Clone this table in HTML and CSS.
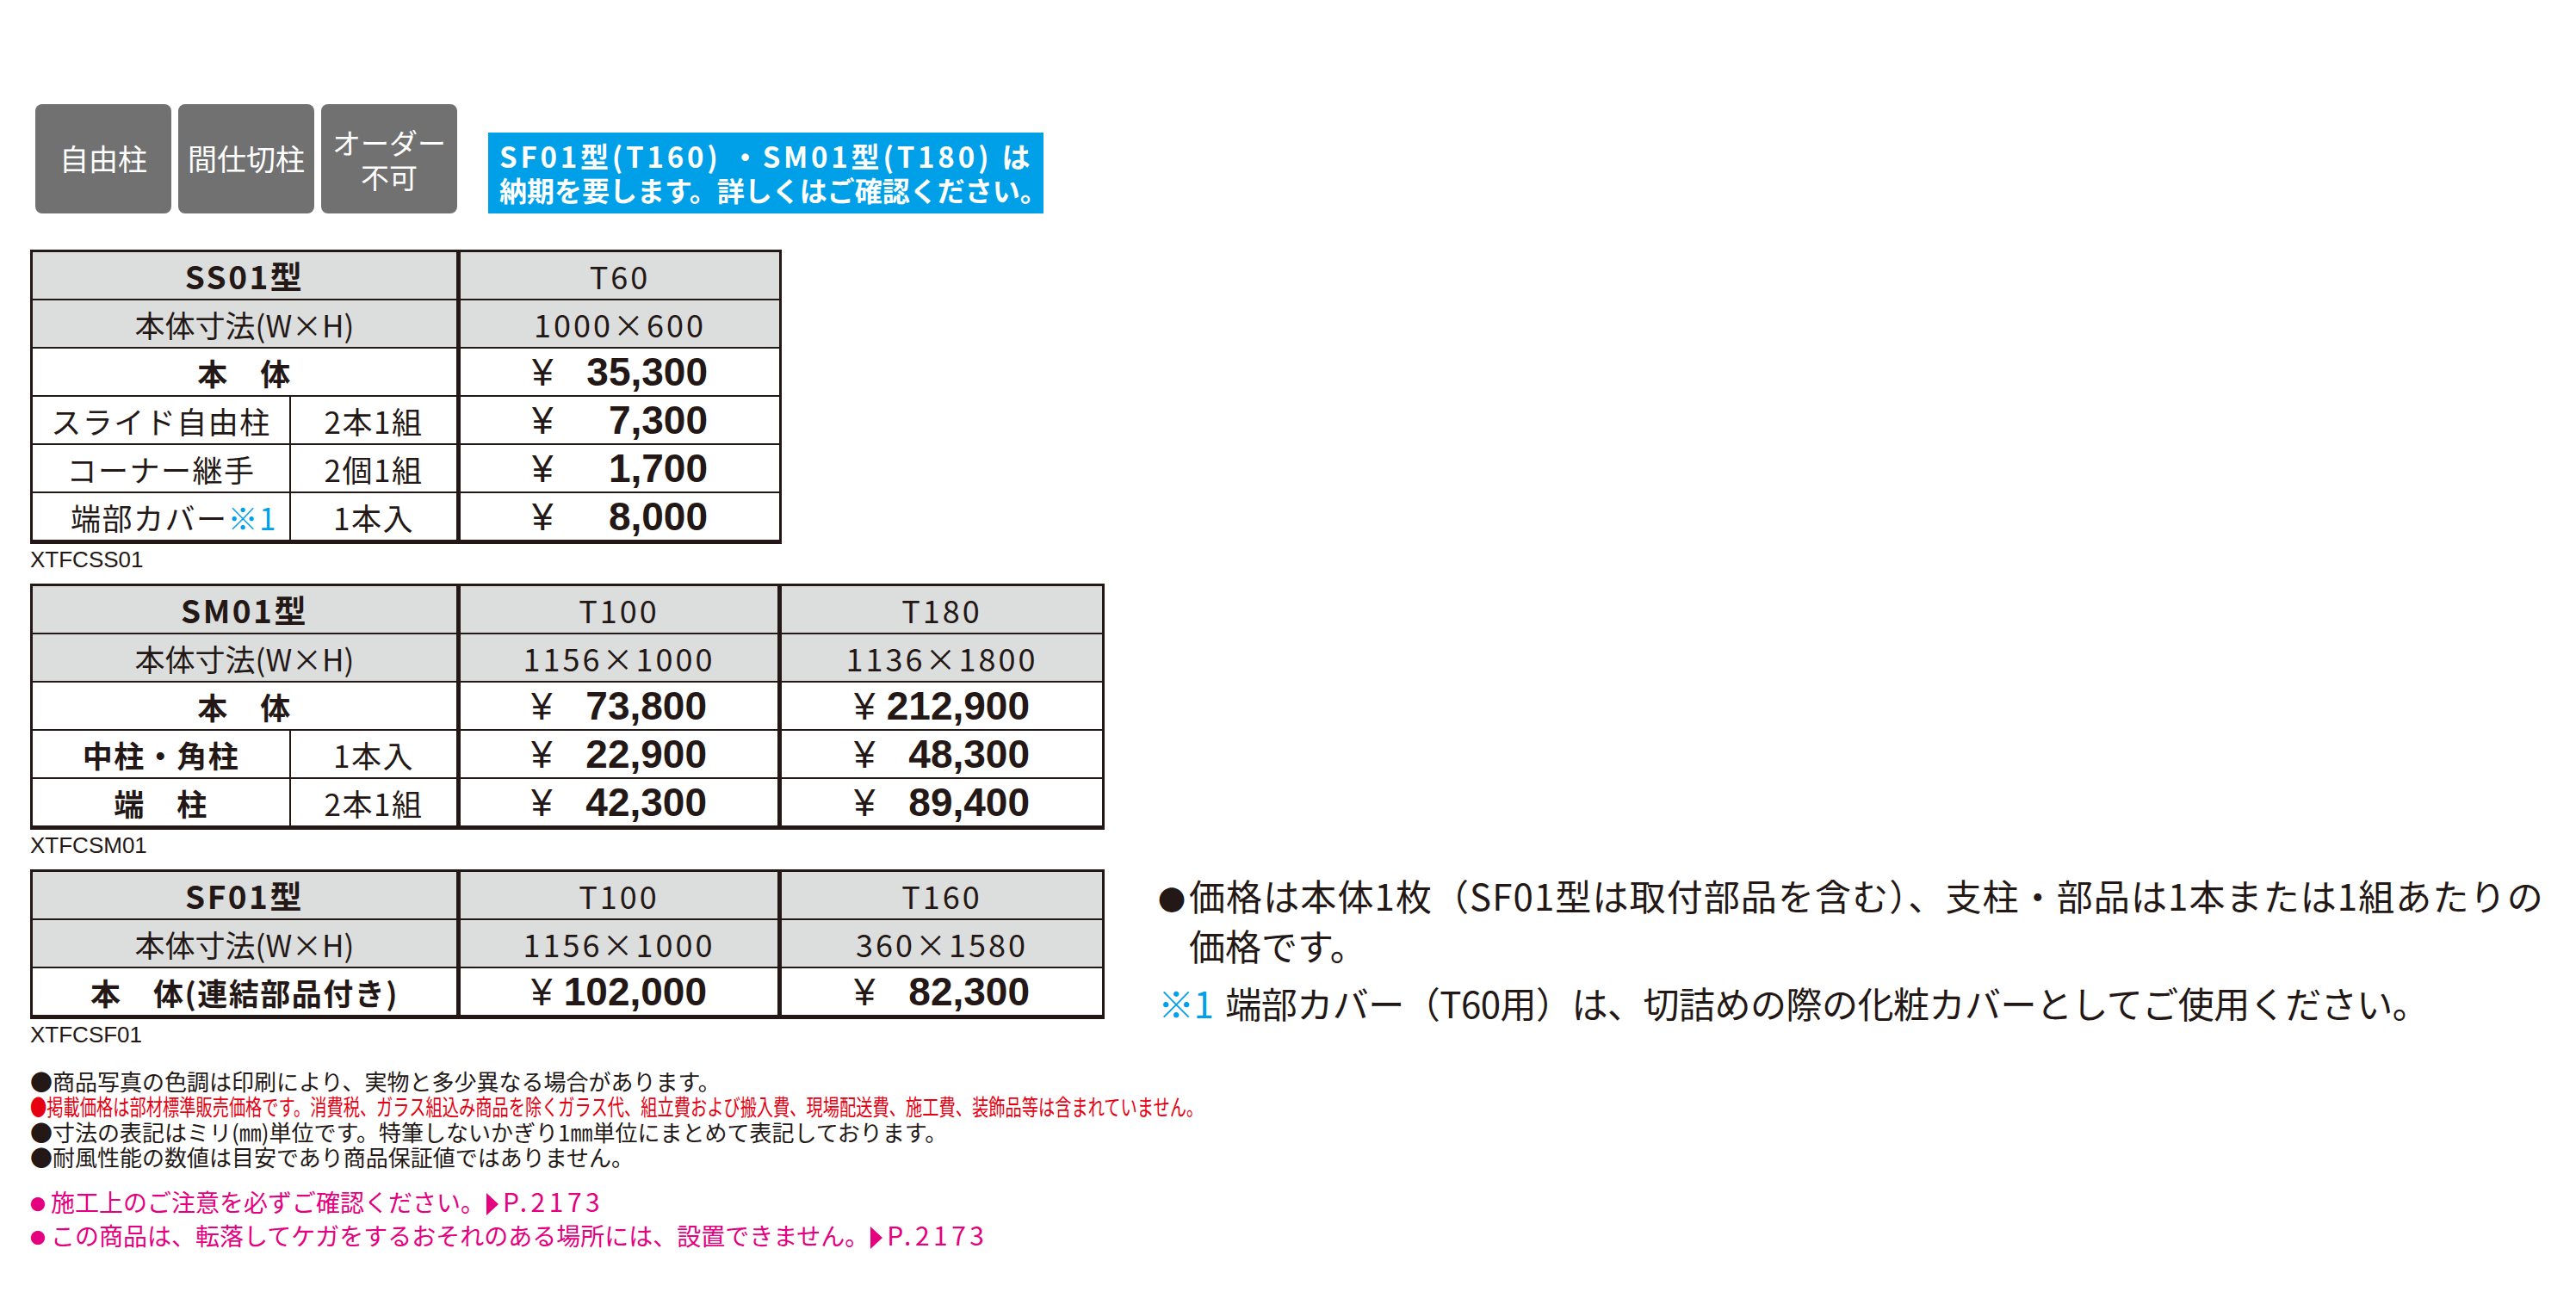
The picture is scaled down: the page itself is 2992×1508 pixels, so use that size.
FILE: index.html
```html
<!DOCTYPE html>
<html lang="ja">
<head>
<meta charset="utf-8">
<title>SS01 / SM01 / SF01 価格表</title>
<link rel="stylesheet" href="styles.css">
</head>
<body>
<div class="page">
  <div class="topbar">
    <div class="tag">自由柱</div>
    <div class="tag">間仕切柱</div>
    <div class="tag tag-two">オーダー<br>不可</div>
    <div class="notice"><span class="n1">SF01型(T160) ・SM01型(T180) は</span><br><span class="n2">納期を要します。詳しくはご確認ください。</span></div>
  </div>

  <div class="tbl t3 first">
    <div class="c g s2 sep b model">SS01型</div>
    <div class="c g end dim">T60</div>
    <div class="c g s2 sep size">本体寸法(W×H)</div>
    <div class="c g end dim">1000×600</div>
    <div class="c s2 sep b">本　体</div>
    <div class="c end"><span class="price"><span class="yen">¥</span><span class="num">35,300</span></span></div>
    <div class="c">スライド自由柱</div>
    <div class="c sep">2本1組</div>
    <div class="c end"><span class="price"><span class="yen">¥</span><span class="num">7,300</span></span></div>
    <div class="c">コーナー継手</div>
    <div class="c sep">2個1組</div>
    <div class="c end"><span class="price"><span class="yen">¥</span><span class="num">1,700</span></span></div>
    <div class="c bot right">端部カバー<span class="kome">※1</span></div>
    <div class="c bot sep">1本入</div>
    <div class="c bot end"><span class="price"><span class="yen">¥</span><span class="num">8,000</span></span></div>
  </div>
  <div class="code">XTFCSS01</div>

  <div class="tbl t4">
    <div class="c g s2 sep b model">SM01型</div>
    <div class="c g sep dim">T100</div>
    <div class="c g end dim">T180</div>
    <div class="c g s2 sep size">本体寸法(W×H)</div>
    <div class="c g sep dim">1156×1000</div>
    <div class="c g end dim">1136×1800</div>
    <div class="c s2 sep b">本　体</div>
    <div class="c sep"><span class="price"><span class="yen">¥</span><span class="num">73,800</span></span></div>
    <div class="c end"><span class="price"><span class="yen">¥</span><span class="num">212,900</span></span></div>
    <div class="c b">中柱・角柱</div>
    <div class="c sep">1本入</div>
    <div class="c sep"><span class="price"><span class="yen">¥</span><span class="num">22,900</span></span></div>
    <div class="c end"><span class="price"><span class="yen">¥</span><span class="num">48,300</span></span></div>
    <div class="c bot b">端　柱</div>
    <div class="c bot sep">2本1組</div>
    <div class="c bot sep"><span class="price"><span class="yen">¥</span><span class="num">42,300</span></span></div>
    <div class="c bot end"><span class="price"><span class="yen">¥</span><span class="num">89,400</span></span></div>
  </div>
  <div class="code">XTFCSM01</div>

  <div class="row3">
    <div class="left3">
      <div class="tbl t4s">
        <div class="c g s2 sep b model">SF01型</div>
        <div class="c g sep dim">T100</div>
        <div class="c g end dim">T160</div>
        <div class="c g s2 sep size">本体寸法(W×H)</div>
        <div class="c g sep dim">1156×1000</div>
        <div class="c g end dim">360×1580</div>
        <div class="c s2 sep bot b">本　体(連結部品付き)</div>
        <div class="c sep bot"><span class="price"><span class="yen">¥</span><span class="num">102,000</span></span></div>
        <div class="c end bot"><span class="price"><span class="yen">¥</span><span class="num">82,300</span></span></div>
      </div>
      <div class="code">XTFCSF01</div>
    </div>
    <div class="side">
      <p class="l1"><span class="dot">●</span>価格は本体1枚（SF01型は取付部品を含む）、支柱・部品は1本または1組あたりの</p>
      <p class="l2">価格です。</p>
      <p class="l3"><span class="kome2">※1</span>端部カバー（T60用）は、切詰めの際の化粧カバーとしてご使用ください。</p>
    </div>
  </div>

  <div class="notes">
    <p>●商品写真の色調は印刷により、実物と多少異なる場合があります。</p>
    <p class="red"><span class="squeeze">●掲載価格は部材標準販売価格です。消費税、ガラス組込み商品を除くガラス代、組立費および搬入費、現場配送費、施工費、装飾品等は含まれていません。</span></p>
    <p>●寸法の表記はミリ(㎜)単位です。特筆しないかぎり1㎜単位にまとめて表記しております。</p>
    <p>●耐風性能の数値は目安であり商品保証値ではありません。</p>
  </div>

  <div class="pink">
    <p><span class="pdot">●</span>施工上のご注意を必ずご確認ください。<span class="tri"></span><span class="pnum">P.2173</span></p>
    <p><span class="pdot">●</span>この商品は、転落してケガをするおそれのある場所には、設置できません。<span class="tri"></span><span class="pnum">P.2173</span></p>
  </div>
</div>
</body>
</html>
```

FILE: styles.css
```css
* { box-sizing: border-box; }
html, body { margin: 0; padding: 0; background: #fff; }
body {
  font-family: "Noto Sans CJK JP", "Noto Sans", sans-serif;
  color: #231815;
}
p { margin: 0; }

.page { padding: 121px 0 0 35px; }

/* top tags */
.topbar {
  display: flex;
  align-items: flex-end;
  margin-left: 6px;
  height: 127px;
}
.tag {
  width: 158px;
  height: 127px;
  margin-right: 8px;
  background: #727171;
  border-radius: 8px;
  color: #fff;
  font-size: 34px;
  line-height: 1.2;
  display: flex;
  align-items: center;
  justify-content: center;
  text-align: center;
}
.tag-two { font-size: 33px; line-height: 40px; }
.notice {
  margin-left: 28px;
  width: 645px;
  height: 94px;
  background: #00a0e9;
  color: #fff;
  font-weight: 700;
  font-size: 32px;
  line-height: 39px;
  padding: 8px 0 0 13px;
  white-space: nowrap;
}
.n1 { font-size: 33px; letter-spacing: 3.8px; }
.n2 { letter-spacing: 0; }

/* tables */
.tbl {
  display: grid;
  width: max-content;
  border-top: 3px solid #231815;
  border-left: 3px solid #231815;
}
.first { margin-top: 42px; }
.t3 {
  grid-template-columns: 300px 197px 373px;
  grid-template-rows: repeat(5, 56px) 59px;
}
.t4 {
  grid-template-columns: 300px 197px 373px 375px;
  grid-template-rows: repeat(4, 56px) 59px;
}
.t4s {
  grid-template-columns: 300px 197px 373px 375px;
  grid-template-rows: 56px 56px 59px;
}
.c {
  border-right: 2px solid #231815;
  border-bottom: 2px solid #231815;
  display: flex;
  align-items: center;
  justify-content: center;
  font-size: 35px;
  letter-spacing: 1.5px;
  white-space: nowrap;
}
.s2 { grid-column: span 2; }
.sep { border-right-width: 5px; }
.end { border-right-width: 3px; }
.bot { border-bottom-width: 5px; }
.g { background: #dcdddd; }
.b { font-weight: 700; }
.model { font-size: 37px; letter-spacing: 2.5px; }
.dim { font-size: 36px; letter-spacing: 3px; }
.size { letter-spacing: 0; }
.right { justify-content: flex-end; padding-right: 14px; }
.kome { color: #00a0e9; }

.price {
  display: flex;
  width: 204px;
  justify-content: space-between;
  align-items: baseline;
  letter-spacing: 0;
  font-family: "Liberation Sans", Arial, sans-serif;
}
.yen { font-size: 44px; font-weight: 400; }
.num { font-size: 46px; font-weight: 700; }

.code {
  font-family: "Liberation Sans", Arial, sans-serif;
  font-size: 26px;
  line-height: 30px;
  margin: 3px 0 13px;
}

/* row with table 3 and side notes */
.row3 { display: flex; align-items: flex-start; }
.side {
  margin-left: 62px;
  padding-top: 3px;
  font-size: 42px;
  line-height: 53px;
  white-space: nowrap;
}
.l1 { letter-spacing: 1.1px; }
.dot { display: inline-block; width: 36px; font-size: 32px; letter-spacing: 0; }
.l2 { padding-left: 36px; }
.l3 { margin-top: 14px; letter-spacing: -0.5px; }
.kome2 { color: #00a0e9; margin-right: 14px; }

/* notes */
.notes {
  margin-top: 11px;
  font-size: 26px;
  line-height: 29.3px;
  white-space: nowrap;
}
.red { color: #e60012; }
.squeeze {
  display: inline-block;
  transform: scaleX(0.74);
  transform-origin: left center;
}
.pink {
  margin-top: 19px;
  color: #e4007f;
  font-size: 28px;
  line-height: 36px;
  white-space: nowrap;
}
.pdot { font-size: 18px; display: inline-block; width: 24px; vertical-align: 2px; }
.tri {
  display: inline-block;
  width: 0;
  height: 0;
  border-left: 14px solid #e4007f;
  border-top: 13px solid transparent;
  border-bottom: 13px solid transparent;
  margin: 0 5px 0 2px;
  vertical-align: -4px;
}
.pnum { font-size: 30px; letter-spacing: 4.5px; }
```
